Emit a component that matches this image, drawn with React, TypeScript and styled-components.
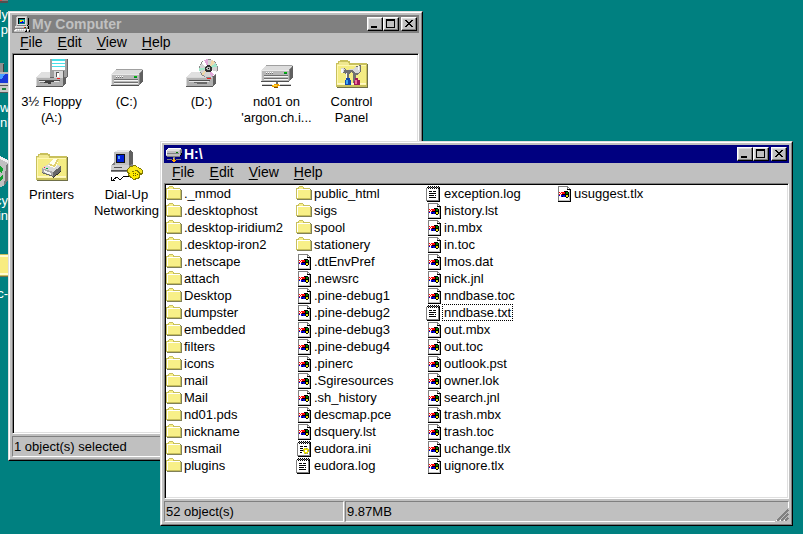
import React from 'react';
import styled, { createGlobalStyle, css } from 'styled-components';

const GlobalStyle = createGlobalStyle`
  *, *::before, *::after { box-sizing: border-box; }
  html, body { margin: 0; height: 100%; }
  #root { height: 100%; }
  body {
    background: #008080;
    color: #000;
    font: 13px/16px "Liberation Sans", Arial, sans-serif;
    overflow: hidden;
  }
  button { font: inherit; color: inherit; }
`;

/* ---------- pixel icons ---------- */

const palette: Record<string, string> = {
  k: '#000000',
  w: '#ffffff',
  g: '#808080',
  s: '#c0c0c0',
  l: '#dfdfdf',
  o: '#c8c05c',
  d: '#808058',
  y: '#f8f088',
  Y: '#e8e000',
  r: '#ff0000',
  b: '#0000e0',
  n: '#008000',
  t: '#008080',
  c: '#60e0e8',
  O: '#ffa800',
};

const Pixels = styled.svg`
  display: block;
  flex: none;
  shape-rendering: crispEdges;
`;

function PixelIcon({ rows }: { rows: string[] }) {
  return (
    <Pixels width={16} height={16} viewBox="0 0 16 16" aria-hidden="true">
      {rows.flatMap((row, y) =>
        Array.from(row.matchAll(/([^.])\1*/g)).map((m) => (
          <rect key={`${m.index}-${y}`} x={m.index} y={y} width={m[0].length} height={1} fill={palette[m[1]]} />
        )),
      )}
    </Pixels>
  );
}

const folderRows = [
  '...oooo.........',
  '..oyyyyo........',
  'oooyyyyooooooo..',
  'owwwwwwwwwwwwwd.',
  'owyyyyyyyyyyyyod',
  'owyyyyyyyyyyyyod',
  'owyyyyyyyyyyyyod',
  'owyyyyyyyyyyyyod',
  'owyyyyyyyyyyyyod',
  'owyyyyyyyyyyyyod',
  'owyyyyyyyyyyyyod',
  'owyyyyyyyyyyyyod',
  'oooooooooooooood',
  '.ddddddddddddddd',
];

const fileRows = [
  '..gggggggggg....',
  '..gwwwwwwwwgg...',
  '..gwwwwwwwwgwg..',
  '..gwwwwwwwwkkkk.',
  '..gwwwwwwwwwwsk.',
  '..gwwwwwkkkkwsk.',
  '..grwrrrrknnksk.',
  '..gwrwrrrknnksk.',
  '..grwrkkkkkkksk.',
  '..gbwbbbbkYYksk.',
  '..gwwbkbbkYYksk.',
  '..gwwwwwwwkkwsk.',
  '..gwwwwwwwwwwsk.',
  '..gwwwwwwwwwwsk.',
  '..gsssssssssssk.',
  '..kkkkkkkkkkkkk.',
];

const notepadRows = [
  '..k.k.k.k.k.k...',
  '.kgkgkgkgkgkgk..',
  'gwkwkwkwkwkwkk..',
  'gwwwwwwwwwwwgk..',
  'gwwwwwwwwwwwgk..',
  'gwwkkkwkkkwwgk..',
  'gwwwwwwwwwwwgk..',
  'gwwkkkkkkkwwgk..',
  'gwwwwwwwwwwwgk..',
  'gwwkkkkkwkwwgk..',
  'gwwwwwwwwwwwgk..',
  'gwwkkkkkkkwwgk..',
  'gwwwwwwwwwwwgk..',
  'gwwwwwwwwwwwgk..',
  'gggggggggggggk..',
  '.kkkkkkkkkkkkk..',
];

const settingsRows = [
  '...k.k.k.k.k.k..',
  '..kgkgkgkgkgkgk.',
  '.gwkwkwkwkwkwkk.',
  '.gwwwwwwwwwwwgk.',
  '.gwwwwwwwwwwwgk.',
  '.gwwkkkwkkkwwgk.',
  '.gwwwwwwwwwwwgk.',
  '.gwwkkkwYYgYwgk.',
  '.gwwwwwYYYYYYgk.',
  '.gwwkkkgYwwYggk.',
  '.gwwwwwYYwwYYgk.',
  '.gwwkkwwYYYYwgk.',
  '.gwwwwwwYgYgwgk.',
  '.gwwwwwwwwwwwgk.',
  '.gggggggggggggk.',
  '..kkkkkkkkkkkkk.',
];

const computerRows = [
  '...ssssssssss...',
  '..slllllllllsg..',
  '..slkkkkkkklsgk.',
  '..slkttttttlsgk.',
  '..slktYYYctlsgk.',
  '..slktYObctlsgk.',
  '..slktbbbbtlsgk.',
  '..slkttttttlsgk.',
  '..slllllllllsgk.',
  '..sgggggggggsk..',
  '.llllllllllllsk.',
  '.lssssssssrnsgk.',
  '.gggggggggggggk.',
  '.lwlwlwlwlwl.ww.',
  'lwlslslslslskwsk',
  'ssssssssssskksgk',
];

const netDriveRows = [
  '................',
  '................',
  '..wwwwwwwwwwwww.',
  '.wllllllllllllsg',
  'wllllllllllllsgg',
  'wsssssssssssssgg',
  'wsssssssssnnssgg',
  'wggggggggggggsgk',
  'wsssssssssssssgk',
  'ssssssssssssssk.',
  '.ggggggggggggg..',
  '.......gg.......',
  '.......sg.......',
  '.ggggg.OO.ggggg.',
  '......OOOO......',
  '.......OO.......',
];

/* ---------- large icons ---------- */

function Art({ children }: { children: React.ReactNode }) {
  return (
    <Pixels width={32} height={32} viewBox="0 0 32 32" aria-hidden="true">
      {children}
    </Pixels>
  );
}

const Slot = () => (
  <>
    <path d="M0 20h27v10H0z" fill="#b0b0b0" />
    <path d="M0 20l5-5h25l-3 5z" fill="#e0e0e0" />
    <path d="M27 20l3-5v11l-3 4z" fill="#606060" />
    <path d="M0 20h26v1H1v8H0z" fill="#d8d8d8" />
    <path d="M0 29h27v1H0z" fill="#585858" />
    <path d="M3 23h21v1H3z" fill="#505050" />
    <path d="M3 24h20v1H3z" fill="#e8e8e8" />
  </>
);

const FloppyIcon = () => (
  <Art>
    <Slot />
    <path d="M9 24h9v1h-3v2h-3v-1H8v-1h1z" fill="#404040" />
    <path d="M4 25h4v1H4z" fill="#808080" />
    <path d="M14 2h18v18l-2 1H14z" fill="#686868" />
    <path d="M14 2h17v18H14z" fill="#a0a0a0" />
    <path d="M16 2h13v11H16z" fill="#fff" />
    <path d="M16 2h13v2H16zM16 6h13v1H16zM16 9h13v1H16z" fill="#48e0e8" />
    <path d="M18 14h9v7h-9z" fill="#d8d8d8" />
    <path d="M20 15h3v5h-3z" fill="#585858" />
    <path d="M21 16h2v4h-2z" fill="#fff" />
    <path d="M27 14h1v7h-1z" fill="#606060" />
    <path d="M21 21h3v1h-3z" fill="#f02020" />
  </Art>
);

const DriveBody = () => (
  <>
    <path d="M0 17h28v12H0z" fill="#b8b8b8" />
    <path d="M0 17l5-5h27l-4 5z" fill="#dcdcdc" />
    <path d="M5 12h26v1H4z" fill="#a0a0a0" />
    <path d="M28 17l4-5v12l-4 5z" fill="#606060" />
    <path d="M28 17l3-4v1l-2 3v11h-1z" fill="#888" />
    <path d="M0 17h28v1H1v10H0z" fill="#e8e8e8" />
    <path d="M0 28h28v1H0z" fill="#505050" />
    <path d="M3 22h24v1H3zM3 25h24v1H3z" fill="#707070" />
    <path d="M3 23h24v1H3zM3 26h24v1H3z" fill="#f4f4f4" />
    <path d="M5 19h1v1H5zM7 19h1v1H7zM9 19h1v1H9zM11 19h1v1h-1z" fill="#fff" />
    <path d="M5 20h1v1H5zM7 20h1v1H7zM9 20h1v1H9zM11 20h1v1h-1z" fill="#707070" />
    <path d="M23 19h3v1h-3z" fill="#00c000" />
    <path d="M23 20h3v1h-3z" fill="#00802c" />
  </>
);

const DriveIcon = () => (
  <Art>
    <DriveBody />
  </Art>
);

const CdIcon = () => (
  <Art>
    <Slot />
    <path d="M8 25h13v2H11v-1H8z" fill="#686868" />
    <circle cx="22.5" cy="11.5" r="9.5" fill="#888" />
    <circle cx="22.5" cy="11.5" r="8.6" fill="#d4d4d4" />
    <path d="M22 11L15 6l4-3zM23 12l8 3-4 4z" fill="#fff" />
    <path d="M22 11L18 3l4-1zM23 12l2 8 3-2z" fill="#e0a8d8" />
    <path d="M22 11l-9 0v3zM23 11l7-5 1 4z" fill="#a0e8c8" />
    <path d="M22 12l-7 5 2 2zM23 11l3-8 3 2z" fill="#f0d8a8" />
    <circle cx="22.5" cy="11.5" r="3.5" fill="#303030" />
    <circle cx="22.5" cy="11.5" r="2" fill="#b8b8b8" />
    <path d="M22 11h1v1h-1z" fill="#000" />
    <path d="M21 21h4v1h-4z" fill="#f02020" />
  </Art>
);

const NetworkDriveIcon = () => (
  <Art>
    <g transform="translate(0 -4)">
      <DriveBody />
    </g>
    <path d="M15 25h2v3h-2z" fill="#707070" />
    <path d="M1 28h11v1H1zM18 28h12v1H18z" fill="#404040" />
    <path d="M1 27h10v1H1zM19 27h11v1H19z" fill="#c8c8c8" />
    <path d="M11 28h2v-1h5v1h1v1h-2v2h-4v-1h-2z" fill="#f0a000" />
    <path d="M12 28h4v1h-4z" fill="#ffe040" />
    <path d="M13 30h4v1h-4z" fill="#805000" />
  </Art>
);

const BigFolder = () => (
  <>
    <path d="M0 7V6h2V4h2V3h8v1h2v2h17v24H0z" fill="#c8c05c" />
    <path d="M3 5h9v1h1v2H1V7h2z" fill="#f0e890" />
    <path d="M1 8h29v20H1z" fill="#fff8b0" />
    <path d="M2 9h28v17H2z" fill="#f4ec84" />
    <path d="M1 26h29v1H1z" fill="#fff8c8" />
    <path d="M31 7h1v24H1v-1h30z" fill="#707048" />
  </>
);

const ControlPanelIcon = () => (
  <Art>
    <BigFolder />
    <path d="M19 9h4V8h2v6l-2 3-3 1v8h-3v-9l-2-2-2 2v9h-2v-9l-4-1-1-5h2l2 2 8-1 2-2z" fill="#707070" />
    <path d="M19 10h4V9h1v5l-2 2h-3l-3-3H8v2l-2-1-1-3h2l2 2 8-1z" fill="#d8d8d8" />
    <path d="M5 12h2v4H5zM22 9h1v4h-1zM10 16h1v7h-1z" fill="#f8f8f8" />
    <path d="M10 21h4v2h1v5H9v-5h1z" fill="#1048b0" />
    <path d="M10 23h2v4h-2z" fill="#40a8f0" />
    <path d="M19 21h3v2h2v5h-6v-4h1z" fill="#a01858" />
    <path d="M19 23h2v4h-2z" fill="#f070a0" />
  </Art>
);

const PrintersIcon = () => (
  <Art>
    <BigFolder />
    <path d="M6 18l8-5 11 3v5l-8 6-11-4z" fill="#686868" />
    <path d="M6 18l8-5 11 3-8 6z" fill="#d8d8d8" />
    <path d="M6 18l11 4v4L6 22z" fill="#a8a8a8" />
    <path d="M12 16l5-7h6l-2 6-3 3z" fill="#fffff0" />
    <path d="M23 9l-4 8-7-2 1-1 5 1 3-6z" fill="#e0d070" />
    <path d="M8 20l7 3v2l-7-3z" fill="#f4f4f4" />
    <path d="M10 18h2v1h-2z" fill="#00a838" />
    <path d="M8 17h1v1H8z" fill="#f02020" />
    <path d="M17 27l8-6v1l-8 6z" fill="#303030" />
  </Art>
);

const DialUpIcon = () => (
  <Art>
    <path d="M3 2l4-2h12l3 2v12l-3 3H5l-2-2z" fill="#606060" />
    <path d="M3 2l4-2h12l-2 2z" fill="#e8e8e8" />
    <path d="M3 2h15v13H3z" fill="#c0c0c0" />
    <path d="M5 4h9v9H5z" fill="#101010" />
    <path d="M6 5h7v7H6z" fill="#0020d8" />
    <path d="M7 6h2v3H7z" fill="#50a0ff" />
    <path d="M0 15l4-3v3h14l4-1v5l-3 3H0z" fill="#808080" />
    <path d="M0 15h18v5H0z" fill="#d0d0d0" />
    <path d="M3 17h8v1H3zM0 20h18v1H0z" fill="#505050" />
    <path d="M2 30l4-3 3 3 4-4 3 1 3-2" fill="none" stroke="#000" />
    <path d="M0 27h1v3h3v1H0z" fill="#000" />
    <path d="M16 20l3-4 5-1 8 5v4l-3 1v3l-6 2-6-4z" fill="#807800" />
    <path d="M17 20l2-3 5-1 7 4v3h-2l-3-3-5 1-2 2-2-1z" fill="#f8e820" />
    <path d="M20 22l5-1 3 3v3l-5 2-5-4z" fill="#ffe800" />
    <path d="M22 23h1v1h-1zM24 23h1v1h-1zM22 25h1v1h-1zM24 25h1v1h-1zM26 24h1v1h-1z" fill="#605800" />
  </Art>
);

/* ---------- window chrome ---------- */

const Desktop = styled.main`
  position: relative;
  min-height: 100%;
  overflow: hidden;
`;

const WindowFrame = styled.section<{ $place: 'back' | 'front' }>`
  position: absolute;
  display: flex;
  flex-direction: column;
  padding: 2px;
  background: #c0c0c0;
  border: 1px solid;
  border-color: #dfdfdf #000 #000 #dfdfdf;
  ${(p) =>
    p.$place === 'back'
      ? css`
          top: 11px;
          left: 8px;
          width: 415px;
          height: 450px;
        `
      : css`
          top: 141px;
          left: 160px;
          right: 10px;
          bottom: 8px;
        `}
`;

const WindowBevel = styled.div`
  display: flex;
  flex-direction: column;
  flex: 1;
  min-height: 0;
  margin: -2px;
  padding: 2px;
  border: 1px solid;
  border-color: #fff #808080 #808080 #fff;
`;

const TitleBar = styled.header<{ $active?: boolean }>`
  display: flex;
  align-items: center;
  height: 18px;
  padding: 0 2px;
  background: ${(p) => (p.$active ? '#000080' : '#808080')};
  color: ${(p) => (p.$active ? '#fff' : '#c0c0c0')};
`;

const TitleText = styled.h2`
  flex: 1;
  margin: 0;
  padding-left: 2px;
  font-size: 14px;
  line-height: 18px;
  font-weight: bold;
`;

const TitleButton = styled.button<{ $apart?: boolean }>`
  display: block;
  width: 16px;
  height: 14px;
  margin-left: ${(p) => (p.$apart ? '2px' : '0')};
  padding: 0;
  background: #c0c0c0;
  border: 1px solid;
  border-color: #fff #000 #000 #fff;
  box-shadow: inset -1px -1px #808080, inset 1px 1px #dfdfdf;
`;

const MenuBar = styled.nav`
  display: flex;
  align-items: flex-start;
  gap: 15px;
  height: 20px;
  padding-left: 8px;
`;

const MenuButton = styled.button`
  padding: 0;
  border: 0;
  background: none;
  font-size: 14px;
  line-height: 18px;

  &::first-letter {
    text-decoration: underline;
    text-underline-offset: 2px;
  }
`;

const ClientArea = styled.div`
  flex: 1;
  min-height: 0;
  overflow: hidden;
  background: #fff;
  border: 1px solid;
  border-color: #808080 #fff #fff #808080;
  box-shadow: inset 1px 1px #000, inset -1px -1px #dfdfdf;
  padding: 1px;
`;

const StatusBar = styled.footer`
  position: relative;
  display: flex;
  gap: 1px;
  margin-top: 2px;
`;

const StatusPane = styled.div<{ $narrow?: boolean }>`
  flex: ${(p) => (p.$narrow ? '0 0 180px' : '1')};
  height: 21px;
  padding-left: 1px;
  line-height: 19px;
  border: 1px solid;
  border-color: #808080 #fff #fff #808080;
`;

const Grip = styled.svg`
  position: absolute;
  right: 0;
  bottom: 0;
  background: #c0c0c0;
  shape-rendering: crispEdges;
`;

function CaptionButtons() {
  return (
    <>
      <TitleButton aria-label="Minimize">
        <Pixels width={14} height={12} viewBox="0 0 14 12">
          <path d="M3 8h6v2H3z" />
        </Pixels>
      </TitleButton>
      <TitleButton aria-label="Maximize">
        <Pixels width={14} height={12} viewBox="0 0 14 12">
          <path fillRule="evenodd" d="M2 1h9v9H2zM3 3v6h7V3z" />
        </Pixels>
      </TitleButton>
      <TitleButton aria-label="Close" $apart>
        <Pixels width={14} height={12} viewBox="0 0 14 12">
          <path d="M3 2h2v1h1v1h2V3h1V2h2v1h-1v1H9v1H8v1h1v1h1v1h1v1H9V8H8V7H6v1H5v1H3V8h1V7h1V6h1V5H5V4H4V3H3z" />
        </Pixels>
      </TitleButton>
    </>
  );
}

interface WindowProps {
  title: string;
  icon: React.ReactNode;
  place: 'back' | 'front';
  active?: boolean;
  status: React.ReactNode;
  children: React.ReactNode;
}

function Window({ title, icon, place, active, status, children }: WindowProps) {
  return (
    <WindowFrame $place={place} aria-label={title}>
      <WindowBevel>
        <TitleBar $active={active}>
          {icon}
          <TitleText>{title}</TitleText>
          <CaptionButtons />
        </TitleBar>
        <MenuBar>
          {['File', 'Edit', 'View', 'Help'].map((name) => (
            <MenuButton key={name}>{name}</MenuButton>
          ))}
        </MenuBar>
        <ClientArea>{children}</ClientArea>
        <StatusBar>{status}</StatusBar>
      </WindowBevel>
    </WindowFrame>
  );
}

/* ---------- window contents ---------- */

const IconGrid = styled.ul`
  display: grid;
  grid-template-columns: repeat(auto-fill, 75px);
  grid-auto-rows: 93px;
  margin: 0;
  padding: 2px 0 0;
  list-style: none;
`;

const LargeItem = styled.button`
  display: flex;
  flex-direction: column;
  align-items: center;
  gap: 5px;
  width: 100%;
  padding: 0;
  border: 0;
  background: none;
  line-height: 16px;
  text-align: center;
  white-space: pre-line;
`;

const FileList = styled.ul`
  display: grid;
  grid-auto-flow: column;
  grid-template-rows: repeat(17, 17px);
  grid-auto-columns: 130px;
  margin: 0;
  padding: 0;
  list-style: none;
`;

const FileItem = styled.button`
  display: flex;
  align-items: center;
  padding: 0;
  border: 0;
  background: none;
  white-space: nowrap;
`;

const FileName = styled.span<{ $focused?: boolean }>`
  padding: 0 1px;
  border: 1px dotted ${(p) => (p.$focused ? '#000' : 'transparent')};
  line-height: 15px;
`;

const computerItems: { label: string; icon: React.ReactNode }[] = [
  { label: '3½ Floppy\n(A:)', icon: <FloppyIcon /> },
  { label: '(C:)', icon: <DriveIcon /> },
  { label: '(D:)', icon: <CdIcon /> },
  { label: "nd01 on\n'argon.ch.i...", icon: <NetworkDriveIcon /> },
  { label: 'Control\nPanel', icon: <ControlPanelIcon /> },
  { label: 'Printers', icon: <PrintersIcon /> },
  { label: 'Dial-Up\nNetworking', icon: <DialUpIcon /> },
];

const folders = [
  '._mmod', '.desktophost', '.desktop-iridium2', '.desktop-iron2', '.netscape', 'attach',
  'Desktop', 'dumpster', 'embedded', 'filters', 'icons', 'mail', 'Mail', 'nd01.pds',
  'nickname', 'nsmail', 'plugins', 'public_html', 'sigs', 'spool', 'stationery',
];

const files = [
  '.dtEnvPref', '.newsrc', '.pine-debug1', '.pine-debug2', '.pine-debug3', '.pine-debug4',
  '.pinerc', '.Sgiresources', '.sh_history', 'descmap.pce', 'dsquery.lst', 'eudora.ini',
  'eudora.log', 'exception.log', 'history.lst', 'in.mbx', 'in.toc', 'lmos.dat', 'nick.jnl',
  'nndbase.toc', 'nndbase.txt', 'out.mbx', 'out.toc', 'outlook.pst', 'owner.lok',
  'search.jnl', 'trash.mbx', 'trash.toc', 'uchange.tlx', 'uignore.tlx', 'usuggest.tlx',
];

function rowsForFile(name: string) {
  if (/\.(log|txt)$/.test(name)) return notepadRows;
  if (name.endsWith('.ini')) return settingsRows;
  return fileRows;
}

const entries = [
  ...folders.map((name) => ({ name, rows: folderRows })),
  ...files.map((name) => ({ name, rows: rowsForFile(name) })),
];

/* ---------- shortcuts at the desktop's edge ---------- */

const ShortcutColumn = styled.div`
  display: flex;
  flex-direction: column;
  width: 8px;
  margin-top: -31px;
`;

const Shortcut = styled.div<{ $align: 'flex-start' | 'flex-end' }>`
  display: flex;
  flex-direction: column;
  align-items: ${(p) => p.$align};
  height: 93px;
  color: #fff;
  line-height: 15px;
  text-align: ${(p) => (p.$align === 'flex-end' ? 'right' : 'left')};
  white-space: pre;
`;

function EdgeArt({ children }: { children: React.ReactNode }) {
  return (
    <Pixels width={8} height={38} viewBox="0 0 8 38" aria-hidden="true">
      {children}
    </Pixels>
  );
}

const shortcuts: { label: string; align: 'flex-start' | 'flex-end'; art: React.ReactNode }[] = [
  {
    label: 'My\np',
    align: 'flex-end',
    art: (
      <>
        <path d="M0 27h8v5H0z" fill="#808080" />
        <path d="M0 32h8v2H0z" fill="#505050" />
        <path d="M0 31h2v1H0z" fill="#e04040" />
      </>
    ),
  },
  {
    label: 'w\nnb',
    align: 'flex-start',
    art: (
      <>
        <path d="M0 1h4v10H0z" fill="#909090" />
        <path d="M3 2h1v9H3z" fill="#404040" />
        <path d="M0 10h8v11H0z" fill="#b8b8b8" />
        <path d="M0 12h8v9H0z" fill="#1838d8" />
        <path d="M0 12h5l-3 5H0z" fill="#48a0ff" />
        <path d="M0 21h8v10H0z" fill="#c8c8c8" />
        <path d="M0 23h8v1H0zM0 30h8v1H0z" fill="#585858" />
        <path d="M2 26h4v2H2z" fill="#208040" />
      </>
    ),
  },
  {
    label: 'cy\nin',
    align: 'flex-end',
    art: (
      <>
        <path d="M0 1l8 4v20l-4 6-4 1z" fill="#c0c0c0" />
        <path d="M0 1l8 4v3L0 4z" fill="#f0f0f0" />
        <path d="M8 8v17l-4 6 2-20z" fill="#787878" />
        <path d="M0 11l3 3-1 4-2-1zM0 22l3-2v4l-3 2z" fill="#10a030" />
      </>
    ),
  },
  {
    label: 'c-',
    align: 'flex-end',
    art: (
      <>
        <path d="M0 6h8v23H0z" fill="#c8c05c" />
        <path d="M0 7h8v20H0z" fill="#fffbd0" />
        <path d="M0 9h8v16H0z" fill="#f8ec80" />
        <path d="M0 28h8v1H0z" fill="#707048" />
      </>
    ),
  },
];

export default function App() {
  return (
    <Desktop>
      <GlobalStyle />
      <ShortcutColumn>
        {shortcuts.map(({ label, align, art }) => (
          <Shortcut key={label} $align={align}>
            <EdgeArt>{art}</EdgeArt>
            <span>{label}</span>
          </Shortcut>
        ))}
      </ShortcutColumn>

      <Window
        title="My Computer"
        icon={<PixelIcon rows={computerRows} />}
        place="back"
        status={<StatusPane>1 object(s) selected</StatusPane>}
      >
        <IconGrid>
          {computerItems.map(({ label, icon }) => (
            <li key={label}>
              <LargeItem>
                {icon}
                <span>{label}</span>
              </LargeItem>
            </li>
          ))}
        </IconGrid>
      </Window>

      <Window
        title="H:\"
        icon={<PixelIcon rows={netDriveRows} />}
        place="front"
        active
        status={
          <>
            <StatusPane $narrow>52 object(s)</StatusPane>
            <StatusPane>9.87MB</StatusPane>
            <Grip width={14} height={14} viewBox="0 0 14 14" aria-hidden="true">
              <path d="M1 13L13 1M5 13l8-8M9 13l4-4" stroke="#fff" />
              <path d="M2 13L13 2M6 13l7-7M10 13l3-3" stroke="#808080" strokeWidth={2} />
            </Grip>
          </>
        }
      >
        <FileList>
          {entries.map(({ name, rows }) => (
            <li key={name}>
              <FileItem>
                <PixelIcon rows={rows} />
                <FileName $focused={name === 'nndbase.txt'}>{name}</FileName>
              </FileItem>
            </li>
          ))}
        </FileList>
      </Window>
    </Desktop>
  );
}
